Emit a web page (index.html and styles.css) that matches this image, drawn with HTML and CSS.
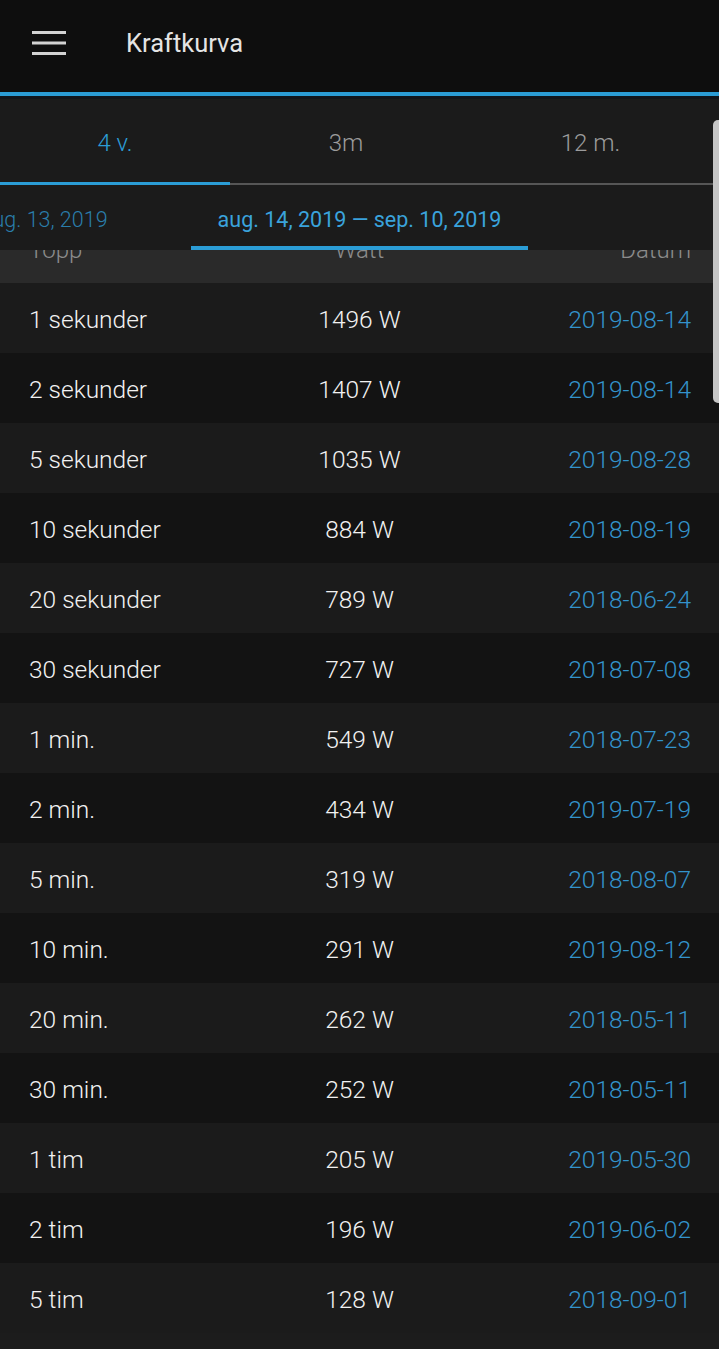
FILE: index.html
```html
<!DOCTYPE html>
<html lang="sv">
<head>
  <meta charset="UTF-8" />
  <meta name="viewport" content="width=device-width, initial-scale=1.0"/>
  <title>Kraftkurva</title>
  <link rel="stylesheet" href="styles.css">
</head>
<body>
  <header class="appbar">
    <svg class="menu-icon" width="34" height="24" viewBox="0 0 34 24">
      <rect x="0" y="0" width="34" height="3" fill="#d2d2d2"/>
      <rect x="0" y="10.5" width="34" height="3" fill="#d2d2d2"/>
      <rect x="0" y="21" width="34" height="3" fill="#d2d2d2"/>
    </svg>
    <h1 class="title">Kraftkurva</h1>
  </header>
  <div class="accent"></div>

  <nav class="tabs">
    <div class="tab active">4 v.</div>
    <div class="tab">3m</div>
    <div class="tab">12 m.</div>
  </nav>

  <div class="pager">
    <div class="page prev">aug. 13, 2019</div>
    <div class="page current">aug. 14, 2019 — sep. 10, 2019</div>
  </div>

  <div class="table-head">
    <span class="col-label">Topp</span>
    <span class="col-watt">Watt</span>
    <span class="col-date">Datum</span>
  </div>

  <div class="list">
    <div class="row"><span class="col-label">1 sekunder</span><span class="col-watt">1496 W</span><span class="col-date">2019-08-14</span></div>
    <div class="row"><span class="col-label">2 sekunder</span><span class="col-watt">1407 W</span><span class="col-date">2019-08-14</span></div>
    <div class="row"><span class="col-label">5 sekunder</span><span class="col-watt">1035 W</span><span class="col-date">2019-08-28</span></div>
    <div class="row"><span class="col-label">10 sekunder</span><span class="col-watt">884 W</span><span class="col-date">2018-08-19</span></div>
    <div class="row"><span class="col-label">20 sekunder</span><span class="col-watt">789 W</span><span class="col-date">2018-06-24</span></div>
    <div class="row"><span class="col-label">30 sekunder</span><span class="col-watt">727 W</span><span class="col-date">2018-07-08</span></div>
    <div class="row"><span class="col-label">1 min.</span><span class="col-watt">549 W</span><span class="col-date">2018-07-23</span></div>
    <div class="row"><span class="col-label">2 min.</span><span class="col-watt">434 W</span><span class="col-date">2019-07-19</span></div>
    <div class="row"><span class="col-label">5 min.</span><span class="col-watt">319 W</span><span class="col-date">2018-08-07</span></div>
    <div class="row"><span class="col-label">10 min.</span><span class="col-watt">291 W</span><span class="col-date">2019-08-12</span></div>
    <div class="row"><span class="col-label">20 min.</span><span class="col-watt">262 W</span><span class="col-date">2018-05-11</span></div>
    <div class="row"><span class="col-label">30 min.</span><span class="col-watt">252 W</span><span class="col-date">2018-05-11</span></div>
    <div class="row"><span class="col-label">1 tim</span><span class="col-watt">205 W</span><span class="col-date">2019-05-30</span></div>
    <div class="row"><span class="col-label">2 tim</span><span class="col-watt">196 W</span><span class="col-date">2019-06-02</span></div>
    <div class="row"><span class="col-label">5 tim</span><span class="col-watt">128 W</span><span class="col-date">2018-09-01</span></div>
  </div>

  <div class="scroll-thumb"></div>
</body>
</html>
```

FILE: styles.css
```css
body {
  margin: 0;
  font-family: Roboto, "Noto Sans", sans-serif;
  background: #1c1c1c;
  color: #e8e8e8;
  overflow: hidden;
}
.appbar {
  height: 92px;
  box-sizing: border-box;
  background: #0e0e0e;
  display: flex;
  align-items: center;
  padding: 0 0 7px 32px;
}
.title {
  margin: 0 0 0 60px;
  font-size: 25.5px;
  font-weight: 400;
  color: #e4e4e4;
}
.accent {
  height: 4px;
  background: #2b9dd6;
  border-bottom: 3px solid #10151b;
}
.tabs {
  display: grid;
  grid-template-columns: 230px 232px 1fr;
  height: 86px;
  background: #1b1b1b;
}
.tab {
  display: flex;
  align-items: center;
  justify-content: center;
  font-size: 24px;
  font-weight: 300;
  color: #9c9c9c;
  border-bottom: 2px solid #565656;
  padding-top: 4px;
}
.tab.active {
  color: #2b9dd6;
  border-bottom: 3px solid #2b9dd6;
  padding-top: 5px;
}
.pager {
  display: flex;
  height: 65px;
  background: #1b1b1b;
  overflow: hidden;
}
.page {
  display: flex;
  align-items: center;
  font-size: 21.5px;
  padding-top: 8px;
}
.prev {
  width: 191px;
  margin-left: -19px;
  color: #2a7eab;
  font-weight: 300;
  flex-shrink: 0;
  padding-bottom: 4px;
}
.current {
  width: 337px;
  margin-left: 19px;
  justify-content: center;
  color: #3aa3dc;
  border-bottom: 4px solid #2b9dd6;
  flex-shrink: 0;
}
.table-head {
  display: grid;
  grid-template-columns: 1fr 1fr 1fr;
  height: 33px;
  background: #2a2a2a;
  overflow: hidden;
  font-size: 24px;
  font-weight: 300;
  line-height: 26px;
}
.table-head span {
  margin-top: -13px;
}
.row {
  display: grid;
  grid-template-columns: 1fr 1fr 1fr;
  align-items: center;
  height: 70px;
  font-size: 24.5px;
  font-weight: 300;
  background: #1b1b1b;
  padding-top: 3px;
  box-sizing: border-box;
}
.row:nth-child(even) {
  background: #131313;
}
.col-label {
  padding-left: 29px;
  color: #f2f2f2;
}
.col-watt {
  text-align: center;
  color: #f2f2f2;
}
.col-date {
  text-align: right;
  padding-right: 28px;
  color: #3393cc;
}
.table-head .col-label,
.table-head .col-watt,
.table-head .col-date {
  color: #8c8c8c;
}
.scroll-thumb {
  position: absolute;
  top: 120px;
  right: 0;
  width: 6px;
  height: 283px;
  background: #c6c6c6;
  border-radius: 5px 0 0 5px;
}
```
